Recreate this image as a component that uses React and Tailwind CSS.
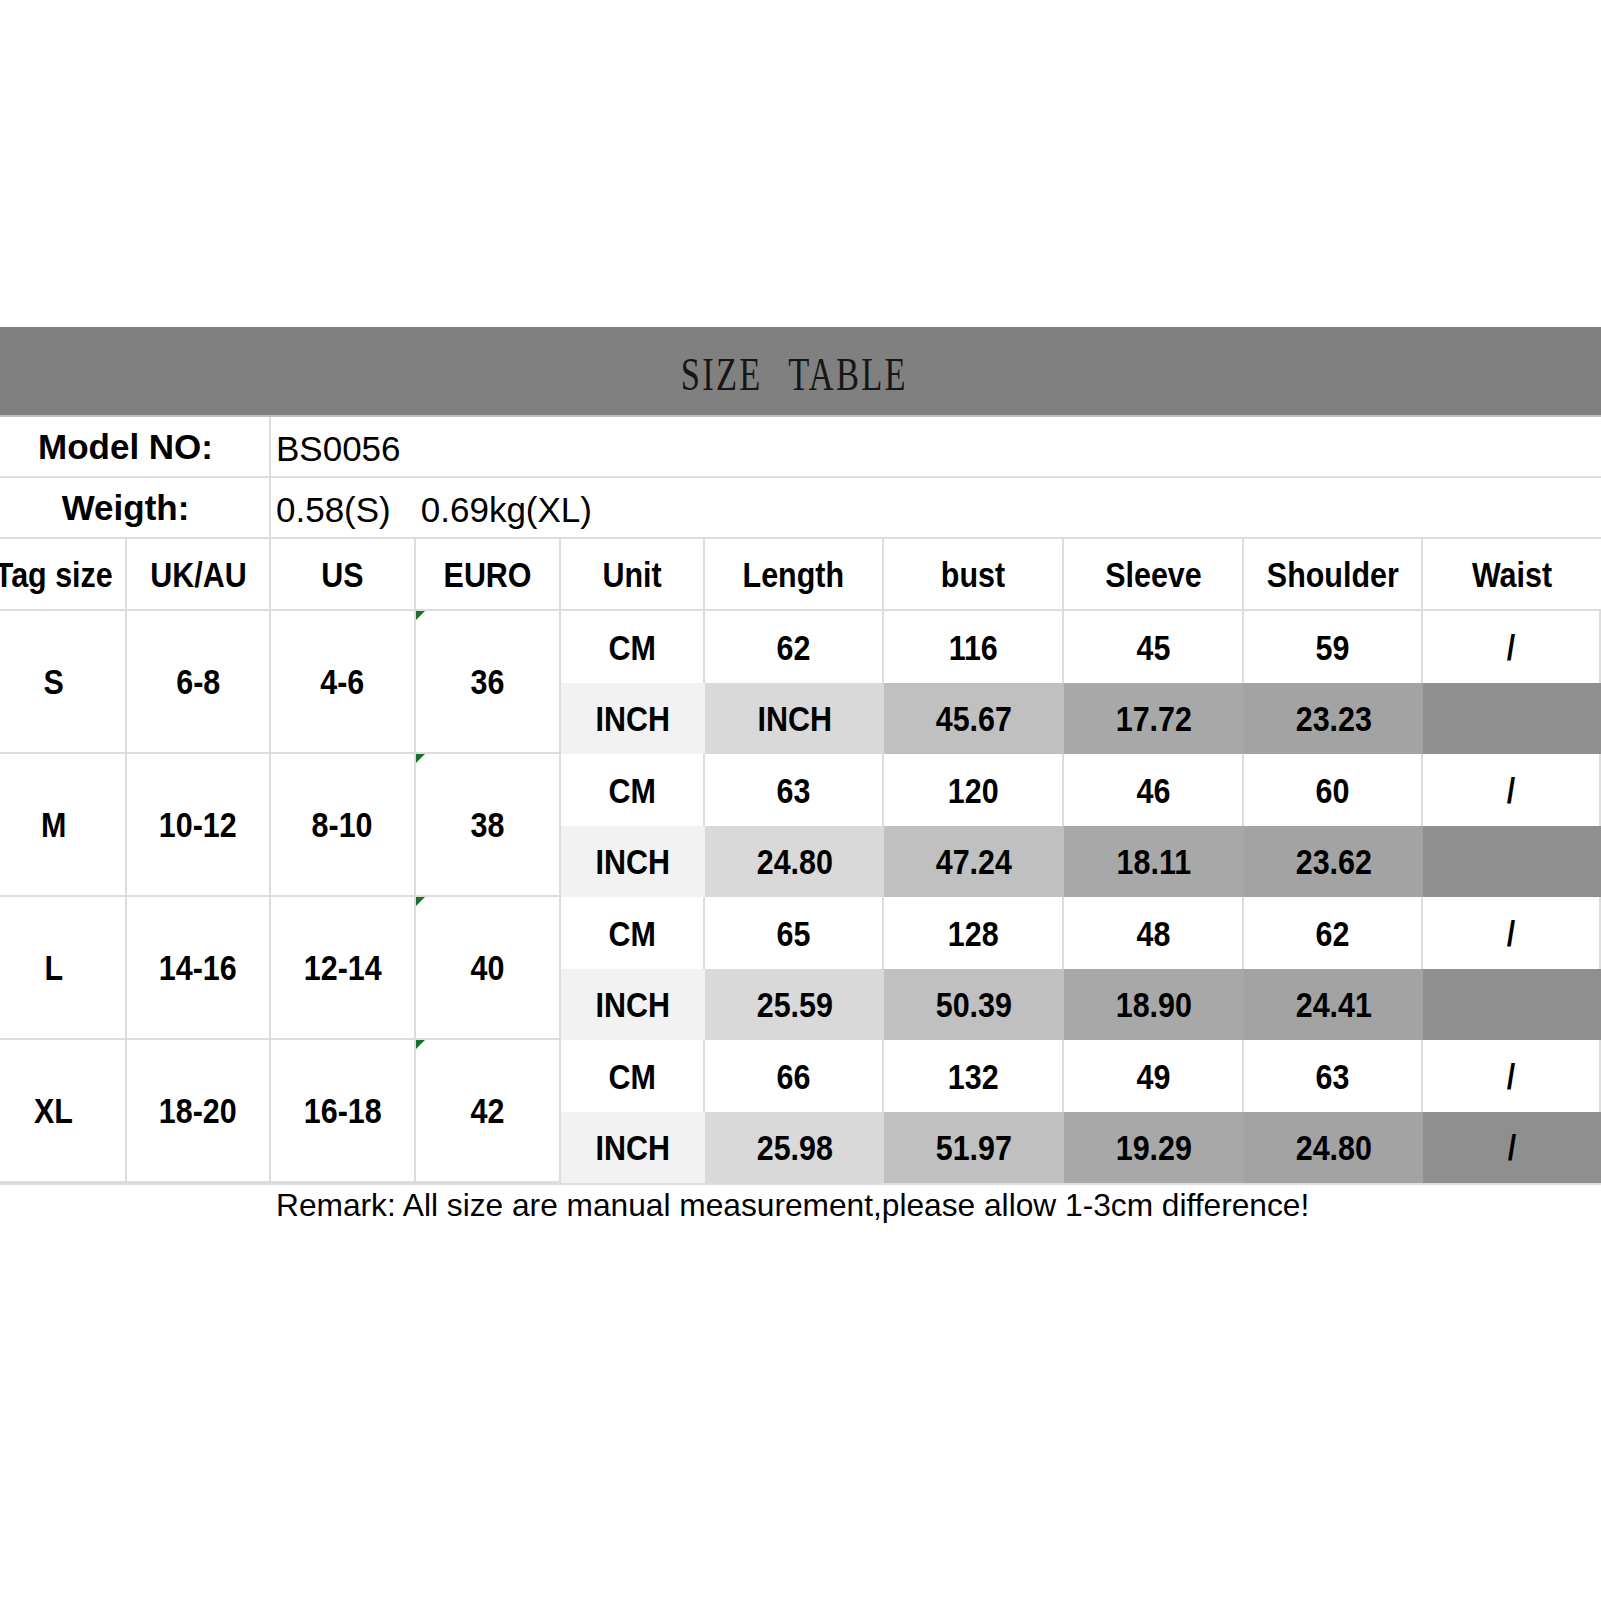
import React from 'react'

const GRID = 'grid grid-cols-[127px_144px_145px_145px_144px_179px_180px_180px_179px_1fr]'

const HEADERS = ['UK/AU', 'US', 'EURO', 'Unit', 'Length', 'bust', 'Sleeve', 'Shoulder', 'Waist']

// inch row shades, Unit column first
const INCH_BG = ['bg-[#f2f2f2]', 'bg-[#d9d9d9]', 'bg-[#c0c0c0]', 'bg-[#a8a8a8]', 'bg-[#a3a3a3]', 'bg-[#8f8f8f]']

const SIZES = [
  { tag: 'S', uk: '6-8', us: '4-6', euro: '36', cm: ['62', '116', '45', '59', '/'], inch: ['INCH', '45.67', '17.72', '23.23', ''] },
  { tag: 'M', uk: '10-12', us: '8-10', euro: '38', cm: ['63', '120', '46', '60', '/'], inch: ['24.80', '47.24', '18.11', '23.62', ''] },
  { tag: 'L', uk: '14-16', us: '12-14', euro: '40', cm: ['65', '128', '48', '62', '/'], inch: ['25.59', '50.39', '18.90', '24.41', ''] },
  { tag: 'XL', uk: '18-20', us: '16-18', euro: '42', cm: ['66', '132', '49', '63', '/'], inch: ['25.98', '51.97', '19.29', '24.80', '/'] },
]

const cellText = "font-['Liberation_Sans',Arial,sans-serif] font-bold text-[35px] leading-none text-black"

// the sheet text is squeezed horizontally
function T({ children }) {
  return <span className="inline-block whitespace-nowrap scale-x-[0.87]">{children}</span>
}

function Flag() {
  return (
    <svg className="absolute left-0 top-0" width="9" height="9" viewBox="0 0 9 9">
      <polygon points="0,0 9,0 0,9" fill="#1d6f30" />
    </svg>
  )
}

function SizeGroup({ s }) {
  const side = 'row-span-2 flex items-center justify-center border-r-2 border-b-2 border-[#dcdcdc]'
  return (
    <div className={`${GRID} grid-rows-[72px_71px] ${cellText}`}>
      <div className={`${side} pr-[18px]`}><T>{s.tag}</T></div>
      <div className={side}><T>{s.uk}</T></div>
      <div className={side}><T>{s.us}</T></div>
      <div className={`${side} relative`}>
        <Flag />
        <T>{s.euro}</T>
      </div>
      <div className="flex items-center justify-center border-r-2 border-[#dcdcdc]"><T>CM</T></div>
      {s.cm.map((v, i) => (
        <div key={i} className="flex items-center justify-center border-r-2 border-[#dcdcdc] last:border-r-0">
          <T>{v}</T>
        </div>
      ))}
      <div className={`flex items-center justify-center ${INCH_BG[0]}`}><T>INCH</T></div>
      {s.inch.map((v, i) => (
        <div key={i} className={`flex items-center justify-center ${INCH_BG[i + 1]}`}>
          <T>{v}</T>
        </div>
      ))}
    </div>
  )
}

export default function App() {
  return (
    <div className="w-[1601px] min-h-[1601px] bg-white pt-[327px] overflow-hidden font-['Liberation_Sans',Arial,sans-serif]">
      {/* Title band */}
      <div className="h-[90px] bg-[#808080] flex items-center justify-center pt-[8px] pr-[12px] border-b-2 border-[#bdbdbd]">
        <span className="inline-flex gap-[34px] scale-x-[0.75] font-['Liberation_Serif',serif] text-[46px] leading-none tracking-[3px] text-[#161616]">
          <span>SIZE</span>
          <span>TABLE</span>
        </span>
      </div>

      {/* Model / weight */}
      <div className="flex h-[61px] border-b-2 border-[#dcdcdc] text-[35px] leading-none text-black">
        <div className="w-[271px] shrink-0 flex items-center justify-center pr-[18px] font-bold border-r-2 border-[#dcdcdc]">
          Model NO:
        </div>
        <div className="flex-1 flex items-center pl-[5px] pt-[4px]">BS0056</div>
      </div>
      <div className="flex h-[61px] border-b-2 border-[#dcdcdc] text-[35px] leading-none text-black">
        <div className="w-[271px] shrink-0 flex items-center justify-center pr-[18px] font-bold border-r-2 border-[#dcdcdc]">
          Weigth:
        </div>
        <div className="flex-1 flex items-center pl-[5px] pt-[4px]">
          <span>0.58(S)</span>
          <span className="ml-[30px]">0.69kg(XL)</span>
        </div>
      </div>

      {/* Column headers */}
      <div className={`${GRID} h-[72px] ${cellText}`}>
        <div className="flex items-center justify-center pr-[18px] border-r-2 border-b-2 border-[#dcdcdc]">
          <T>Tag size</T>
        </div>
        {HEADERS.map((h) => (
          <div key={h} className="flex items-center justify-center border-r-2 border-b-2 border-[#dcdcdc] last:border-r-0">
            <T>{h}</T>
          </div>
        ))}
      </div>

      {SIZES.map((s) => (
        <SizeGroup key={s.tag} s={s} />
      ))}

      {/* Remark */}
      <div className="border-t-2 border-[#dcdcdc] pl-[276px] pt-[5px] text-[31.7px] leading-none text-black">
        Remark: All size are manual measurement,please allow 1-3cm difference!
      </div>
    </div>
  )
}
